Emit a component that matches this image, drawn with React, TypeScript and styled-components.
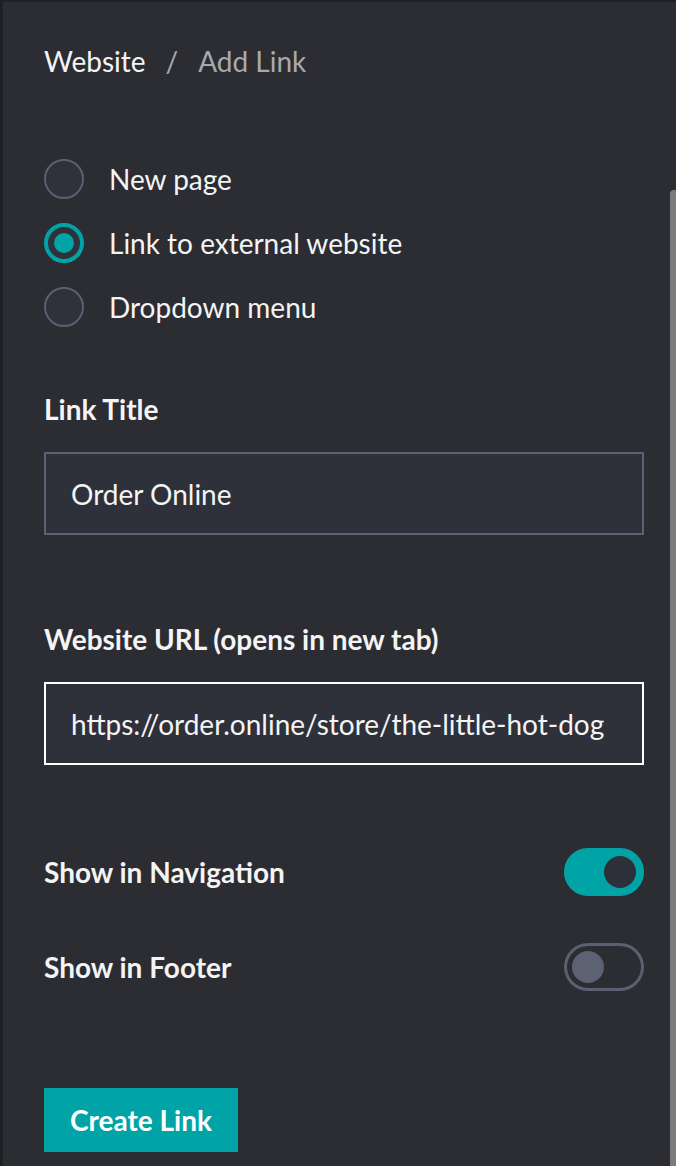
import React, { useState } from 'react'
import styled, { createGlobalStyle } from 'styled-components'

const GlobalStyle = createGlobalStyle`
  html, body {
    margin: 0;
    padding: 0;
    background: #2c2d32;
  }
  * {
    box-sizing: border-box;
  }
`

const teal = '#00a4a6'

const Page = styled.div`
  position: relative;
  min-height: 1166px;
  background: #2c2d32;
  border-top: 2px solid #1f2024;
  border-left: 3px solid #1f2024;
  padding: 43px 32px 0 41px;
  font-family: Lato, 'Open Sans', sans-serif;
  font-size: 28px;
  color: #f4f4f5;
  overflow: hidden;
  display: flex;
  flex-direction: column;
`

const ScrollThumb = styled.div`
  position: absolute;
  right: 0;
  top: 188px;
  bottom: 0;
  width: 6px;
  background: #7b7b7b;
  border-top-left-radius: 4px;
`

const Breadcrumb = styled.nav`
  display: flex;
  align-items: center;
  gap: 20px;
  line-height: 32px;
`

const Crumb = styled.span<{ $current?: boolean }>`
  color: ${p => (p.$current ? '#a9aaae' : '#f4f4f5')};
`

const RadioList = styled.div`
  margin-top: 82px;
  display: flex;
  flex-direction: column;
  gap: 24px;
`

const RadioRow = styled.label`
  display: flex;
  align-items: center;
  gap: 25px;
  line-height: 40px;
  cursor: pointer;
`

const RadioCircle = styled.span<{ $checked: boolean }>`
  width: 40px;
  height: 40px;
  border-radius: 50%;
  flex-shrink: 0;
  display: flex;
  align-items: center;
  justify-content: center;
  background: #2f323b;
  border: ${p => (p.$checked ? `4px solid ${teal}` : '2px solid #5b5f6f')};
  &::after {
    content: '';
    display: ${p => (p.$checked ? 'block' : 'none')};
    width: 20px;
    height: 20px;
    border-radius: 50%;
    background: ${teal};
  }
`

const Field = styled.div<{ $top: number }>`
  margin-top: ${p => p.$top}px;
  display: flex;
  flex-direction: column;
  gap: 27px;
`

const Label = styled.div`
  line-height: 32px;
  font-weight: 700;
`

const Input = styled.input<{ $focused?: boolean }>`
  width: 100%;
  height: 83px;
  padding: 0 25px;
  background: #2f313a;
  border: 2px solid ${p => (p.$focused ? '#ffffff' : '#5d6273')};
  color: #f4f4f5;
  font-family: inherit;
  font-size: 28px;
  outline: none;
  border-radius: 0;
`

const ToggleRow = styled.div<{ $top: number }>`
  margin-top: ${p => p.$top}px;
  display: flex;
  align-items: center;
  justify-content: space-between;
  height: 48px;
`

const Switch = styled.button<{ $on: boolean }>`
  width: 80px;
  height: 48px;
  border-radius: 24px;
  padding: 0 5px;
  cursor: pointer;
  display: flex;
  align-items: center;
  justify-content: ${p => (p.$on ? 'flex-end' : 'flex-start')};
  background: ${p => (p.$on ? teal : '#2c2d32')};
  border: 3px solid ${p => (p.$on ? teal : '#5b5f6f')};
  &::after {
    content: '';
    width: 32px;
    height: 32px;
    border-radius: 50%;
    background: ${p => (p.$on ? '#2e3039' : '#5d6273')};
  }
`

const SubmitButton = styled.button`
  margin-top: 97px;
  align-self: flex-start;
  width: 194px;
  height: 64px;
  background: ${teal};
  border: none;
  color: #ffffff;
  font-family: inherit;
  font-size: 28px;
  font-weight: 700;
  cursor: pointer;
`

const options = ['New page', 'Link to external website', 'Dropdown menu']

export default function App() {
  const [selected, setSelected] = useState(1)
  const [title, setTitle] = useState('Order Online')
  const [url, setUrl] = useState('https://order.online/store/the-little-hot-dog')
  const [nav, setNav] = useState(true)
  const [footer, setFooter] = useState(false)

  return (
    <>
      <GlobalStyle />
      <Page>
        <ScrollThumb />
        <Breadcrumb>
          <Crumb>Website</Crumb>
          <Crumb $current>/</Crumb>
          <Crumb $current>Add Link</Crumb>
        </Breadcrumb>

        <RadioList>
          {options.map((o, i) => (
            <RadioRow key={o} onClick={() => setSelected(i)}>
              <RadioCircle $checked={selected === i} />
              {o}
            </RadioRow>
          ))}
        </RadioList>

        <Field $top={66}>
          <Label>Link Title</Label>
          <Input value={title} onChange={e => setTitle(e.target.value)} />
        </Field>

        <Field $top={88}>
          <Label>Website URL (opens in new tab)</Label>
          <Input $focused value={url} onChange={e => setUrl(e.target.value)} />
        </Field>

        <ToggleRow $top={83}>
          <Label>Show in Navigation</Label>
          <Switch $on={nav} onClick={() => setNav(!nav)} />
        </ToggleRow>

        <ToggleRow $top={47}>
          <Label>Show in Footer</Label>
          <Switch $on={footer} onClick={() => setFooter(!footer)} />
        </ToggleRow>

        <SubmitButton>Create Link</SubmitButton>
      </Page>
    </>
  )
}
